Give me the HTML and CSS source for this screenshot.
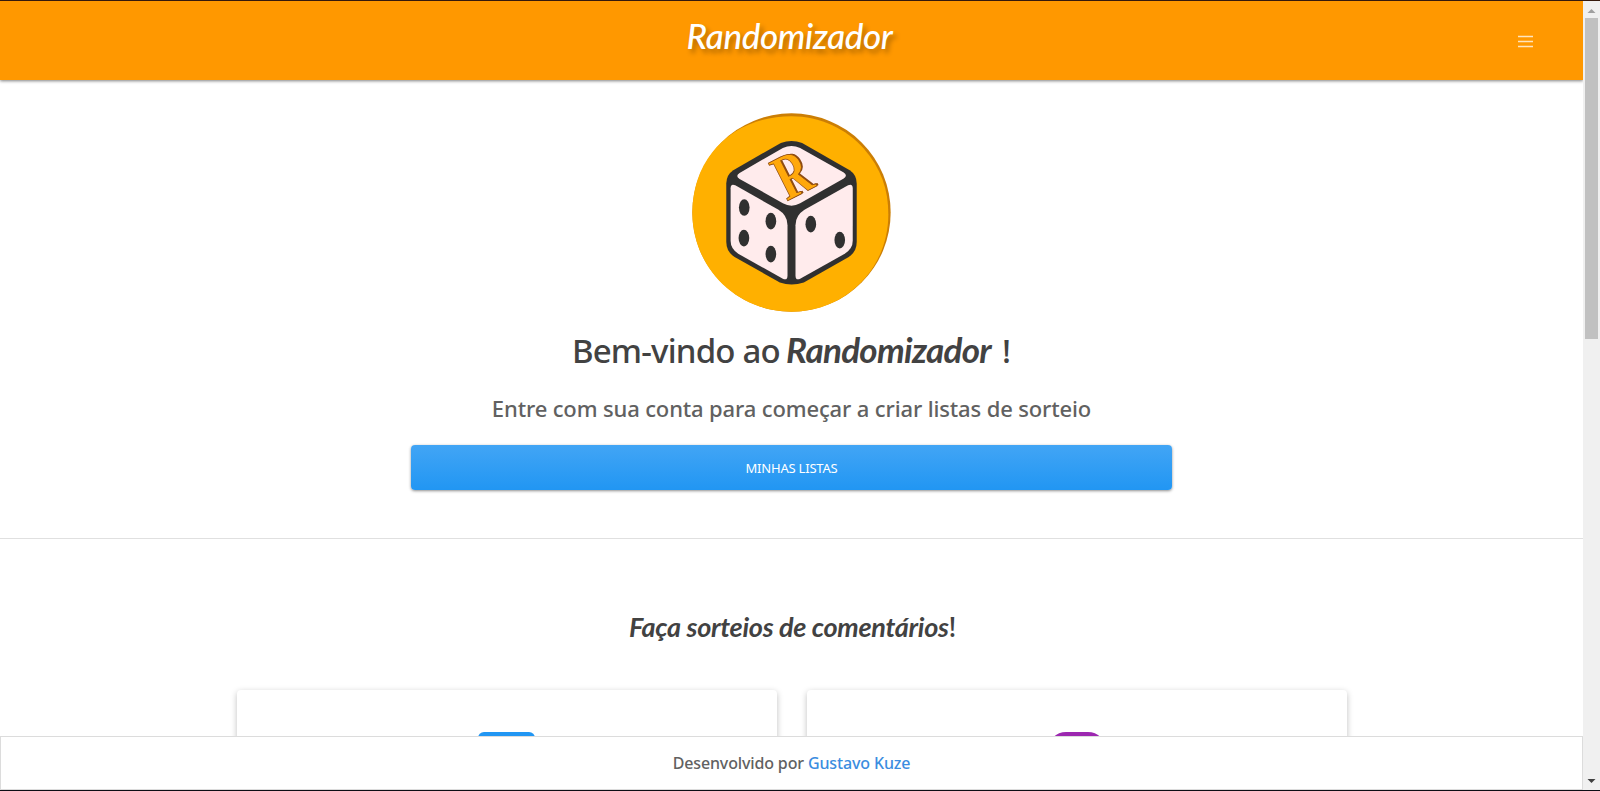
FILE: index.html
```html
<!DOCTYPE html>
<html lang="pt-BR">
<head>
<meta charset="utf-8">
<title>Randomizador</title>
<link rel="stylesheet" href="styles.css">
</head>
<body>
<div class="window">
  <div class="page">
    <header class="navbar">
      <span class="navbar-side"></span>
      <a class="brand script">Randomizador</a>
      <span class="navbar-side navbar-end">
        <svg class="menu-icon" width="16" height="14" viewBox="0 0 16 14"><path d="M1 1.5h15M1 6.5h15M1 11.5h15" stroke="#fff" stroke-opacity=".75" stroke-width="1.3"/></svg>
      </span>
    </header>
    <section class="hero">
      <svg class="logo" width="199" height="199" viewBox="36 40 598 598">
        <circle cx="335" cy="339" r="298" fill="#cb7e05"/>
        <path d="M335 50C420 50 500 88 552 147S626 270 626 345C626 505 500 637 335 637S37 505 37 339 160 50 335 50Z" fill="#ffb000"/>
        <g transform="translate(0 2)">
        <path d="M303 128Q335 117 367 128L510 210Q531 224 531 250V425Q531 455 507 471L372 547Q335 559 300 547L164 471Q139 455 139 425V250Q139 224 160 210Z" fill="#303030"/>
        <path d="M309 143Q335 131 361 143L492 217Q505 226 492 235L361 309Q335 324 309 309L179 236Q165 227 179 218Z" fill="#ffebec"/>
        <path d="M152 264Q152 249 166 255L296 329Q323 346 323 375V526Q323 542 309 536L175 461Q152 446 152 422Z" fill="#ffebec"/>
        <path d="M519 264Q519 249 505 255L374 329Q347 346 347 375V526Q347 542 361 536L495 461Q519 446 519 422Z" fill="#ffebec"/>
        <g fill="#303030"><ellipse cx="193" cy="322" rx="16" ry="25"/><ellipse cx="273" cy="363" rx="16" ry="25"/><ellipse cx="192" cy="414" rx="16" ry="25"/><ellipse cx="273" cy="462" rx="16" ry="25"/><ellipse cx="393" cy="372" rx="16" ry="25"/><ellipse cx="480" cy="420" rx="16" ry="25"/></g>
        <g class="logo-letter" transform="translate(324 302) rotate(-27) skewX(8) scale(.98 1.2)"><text x="5" y="0" fill="#8d4b12">R</text><text fill="#ffa80b" stroke="#8d4b12" stroke-width="2">R</text></g>
        </g>
      </svg>
      <h1 class="welcome"><span class="welcome-lead">Bem-vindo ao</span><span class="script welcome-name">Randomizador</span><span class="welcome-mark">!</span></h1>
      <h2 class="subtitle">Entre com sua conta para começar a criar listas de sorteio</h2>
      <a class="button">MINHAS LISTAS</a>
    </section>
    <section class="features">
      <h2 class="features-title"><span class="script">Faça sorteios de comentários</span><span>!</span></h2>
      <div class="cards">
        <article class="card"><span class="card-icon card-icon-blue"></span></article>
        <article class="card"><span class="card-icon card-icon-purple"></span></article>
      </div>
    </section>
    <footer class="footer"><span>Desenvolvido por <a>Gustavo Kuze</a></span></footer>
  </div>
  <div class="scrollbar">
    <svg width="17" height="17"><path d="M4.5 12l4-4 4 4z" fill="#a0a0a0"/></svg>
    <div class="thumb"></div>
    <svg class="arrow-down" width="17" height="17"><path d="M4.5 6l4 4 4-4z" fill="#404040"/></svg>
  </div>
</div>
</body>
</html>
```
FILE: styles.css
```css
* { box-sizing: border-box; }
body { margin: 0; background: #fff; font-family: "Noto Sans", "Open Sans", sans-serif; color: #424242; overflow: hidden; }
.window { display: flex; height: 791px; border-top: 1px solid #35190c; border-bottom: 1px solid #0c0c14; }
.page { position: relative; width: 1583px; height: 789px; overflow: hidden; background: #fff; }
.script { font-family: Lato, sans-serif; font-style: italic; font-weight: 500; }
.navbar { display: flex; align-items: center; height: 79px; padding: 0 50px; background: #ff9800; box-shadow: 0 1px 3px rgba(0,0,0,.5); }
.navbar-side { flex: 1; display: flex; }
.navbar-end { justify-content: flex-end; }
.menu-icon { margin-top: 2px; }
.brand { margin: -12px 4px 0 0; color: #fff; font-size: 35px; line-height: 44px; letter-spacing: -.35px; white-space: nowrap; text-shadow: 3px 4px 5px rgba(0,0,0,.3); }
.hero { display: flex; flex-direction: column; align-items: center; height: 459px; padding-top: 33px; border-bottom: 1px solid #e0e0e0; }
.logo { display: block; }
.logo-letter { font: italic 900 162px "Liberation Serif", serif; }
.welcome { display: flex; align-items: baseline; margin: 11px 0 0; font-size: 33px; line-height: 52px; font-weight: 500; white-space: nowrap; }
.welcome-lead { letter-spacing: -.8px; }
.welcome-name { margin-left: 6px; font-size: 35px; font-weight: 700; letter-spacing: -.7px; }
.welcome-mark { margin-left: 11px; }
.subtitle { margin: 14px 0 0; font-size: 22px; line-height: 34px; font-weight: 500; letter-spacing: -.14px; color: #616161; white-space: nowrap; }
.button { display: flex; align-items: center; justify-content: center; width: 761px; height: 45px; margin-top: 20px; border-radius: 4px; background: linear-gradient(#42a5f5, #2196f3); box-shadow: 0 1px 3px rgba(0,0,0,.45); color: #fff; font-size: 13px; letter-spacing: -.2px; }
.features { padding-top: 68px; }
.features-title { margin: 0; padding-left: 2px; text-align: center; font-size: 27px; line-height: 40px; font-weight: 500; white-space: nowrap; }
.features-title .script { font-weight: 700; letter-spacing: -.28px; }
.cards { display: flex; justify-content: center; gap: 30px; margin-top: 43px; }
.card { display: flex; justify-content: center; width: 540px; height: 200px; padding-top: 42px; border-radius: 4px; box-shadow: 0 2px 6px rgba(0,0,0,.25); }
.card-icon { width: 57px; height: 58px; }
.card-icon-blue { border-radius: 6px; background: #2196f3; }
.card-icon-purple { width: 58px; border-radius: 18px; background: #9c27b0; }
.footer { position: absolute; left: 0; right: 0; bottom: 0; display: flex; align-items: center; justify-content: center; height: 54px; border: 1px solid #dcdcdc; background: #fff; color: #616161; font-size: 16px; font-weight: 500; letter-spacing: -.14px; }
.footer a { color: #3b8de0; }
.scrollbar { display: flex; flex-direction: column; width: 17px; background: #f0f0f0; }
.scrollbar svg { display: block; }
.thumb { width: 13px; height: 321px; margin-left: 2px; background: #c1c1c1; }
.arrow-down { margin-top: auto; }
```
